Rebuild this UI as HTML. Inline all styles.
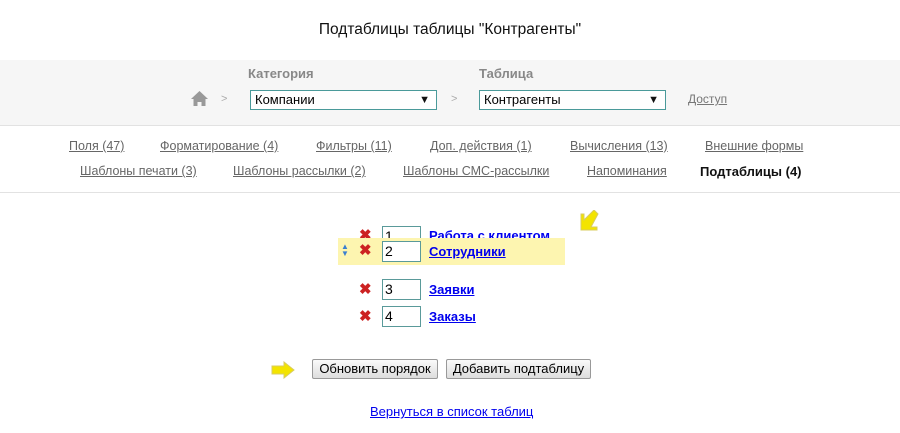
<!DOCTYPE html>
<html><head><meta charset="utf-8"><style>
body{margin:0;width:900px;height:433px;background:#fff;font-family:"Liberation Sans",Arial,sans-serif;position:relative;overflow:hidden}
.a{position:absolute;white-space:nowrap}
.t{font-size:12.5px;color:#666;text-decoration:underline}
.sel{position:absolute;border:1px solid #4a9a9a;background:#fff;font-size:13px;line-height:18px;padding-left:4px;box-sizing:border-box;height:20px}
.sel:after{content:"▼";position:absolute;right:6px;top:0;font-size:11px;color:#111}
.inp{position:absolute;width:39px;height:21px;border:1px solid #5a9a9a;box-sizing:border-box;font-size:14px;line-height:19px;padding-left:2px;background:#fff}
.lnk{position:absolute;color:#0000ee;font-weight:bold;font-size:13px;text-decoration:underline}
.x{position:absolute;color:#c22;font-size:15px;font-weight:bold;line-height:15px}
.btn{position:absolute;height:20px;border:1px solid #999;border-radius:2px;background:linear-gradient(#fafafa,#ddd);font-size:13px;line-height:18px;box-sizing:border-box;text-align:center}
</style></head><body>
<div class="a" style="left:0;width:900px;top:21px;text-align:center;font-size:15.5px;color:#111">Подтаблицы таблицы "Контрагенты"</div>
<div class="a" style="left:0;top:60px;width:900px;height:65px;background:#f6f6f6;border-bottom:1px solid #e2e2e2"></div>
<div class="a" style="left:248px;top:66px;font-size:13px;font-weight:bold;color:#888">Категория</div>
<div class="a" style="left:479px;top:66px;font-size:13px;font-weight:bold;color:#888">Таблица</div>
<svg class="a" style="left:191px;top:91px" width="17" height="15"><path d="M8.5 0L0 8h2.5v7h4v-4h4v4h4V8H17z" fill="#999"/></svg>
<div class="a" style="left:221px;top:93px;font-size:11px;color:#aaa">&gt;</div>
<div class="a" style="left:451px;top:93px;font-size:11px;color:#aaa">&gt;</div>
<div class="sel" style="left:250px;top:90px;width:187px">Компании</div>
<div class="sel" style="left:479px;top:90px;width:187px">Контрагенты</div>
<div class="a t" style="left:688px;top:92px;font-size:12px;color:#777">Доступ</div>
<div class="a t" style="left:69px;top:139px">Поля (47)</div>
<div class="a t" style="left:160px;top:139px">Форматирование (4)</div>
<div class="a t" style="left:316px;top:139px">Фильтры (11)</div>
<div class="a t" style="left:430px;top:139px">Доп. действия (1)</div>
<div class="a t" style="left:570px;top:139px">Вычисления (13)</div>
<div class="a t" style="left:705px;top:139px">Внешние формы</div>
<div class="a t" style="left:80px;top:164px">Шаблоны печати (3)</div>
<div class="a t" style="left:233px;top:164px">Шаблоны рассылки (2)</div>
<div class="a t" style="left:403px;top:164px">Шаблоны СМС-рассылки</div>
<div class="a t" style="left:587px;top:164px">Напоминания</div>
<div class="a" style="left:700px;top:164px;font-size:13px;font-weight:bold;color:#111">Подтаблицы (4)</div>
<div class="a" style="left:0;top:192px;width:900px;border-top:1px solid #e2e2e2"></div>
<div class="a" style="left:340px;top:225px;width:240px;height:13px;overflow:hidden">
 <div class="x" style="left:19px;top:3px">✖</div>
 <div class="inp" style="left:42px;top:1px">1</div>
 <div class="lnk" style="left:89px;top:3px">Работа с клиентом</div>
</div>
<div class="a" style="left:338px;top:238px;width:227px;height:27px;background:#fdf5b0"></div>
<div class="a" style="left:341px;top:243px;font-size:8px;color:#3a7fd0;line-height:7px">▲<br>▼</div>
<div class="x" style="left:359px;top:243px">✖</div>
<div class="inp" style="left:382px;top:241px">2</div>
<div class="lnk" style="left:429px;top:244px">Сотрудники</div>
<div class="x" style="left:359px;top:282px">✖</div>
<div class="inp" style="left:382px;top:279px">3</div>
<div class="lnk" style="left:429px;top:282px">Заявки</div>
<div class="x" style="left:359px;top:309px">✖</div>
<div class="inp" style="left:382px;top:306px">4</div>
<div class="lnk" style="left:429px;top:309px">Заказы</div>
<svg class="a" style="left:578px;top:210px" width="22" height="22"><path d="M20 4L16 0 6 10V4H3v16h16v-3h-6z" fill="#f3e400" stroke="#d8cc60"/></svg>
<svg class="a" style="left:270px;top:361px" width="26" height="18"><path d="M2 5h12V1l10 8-10 8v-4H2z" fill="#f3e400" stroke="#d8cc60"/></svg>
<div class="btn" style="left:312px;top:359px;width:126px">Обновить порядок</div>
<div class="btn" style="left:446px;top:359px;width:145px">Добавить подтаблицу</div>
<div class="a" style="left:370px;top:404px;font-size:13px;color:#0000ee;text-decoration:underline">Вернуться в список таблиц</div>
</body></html>
